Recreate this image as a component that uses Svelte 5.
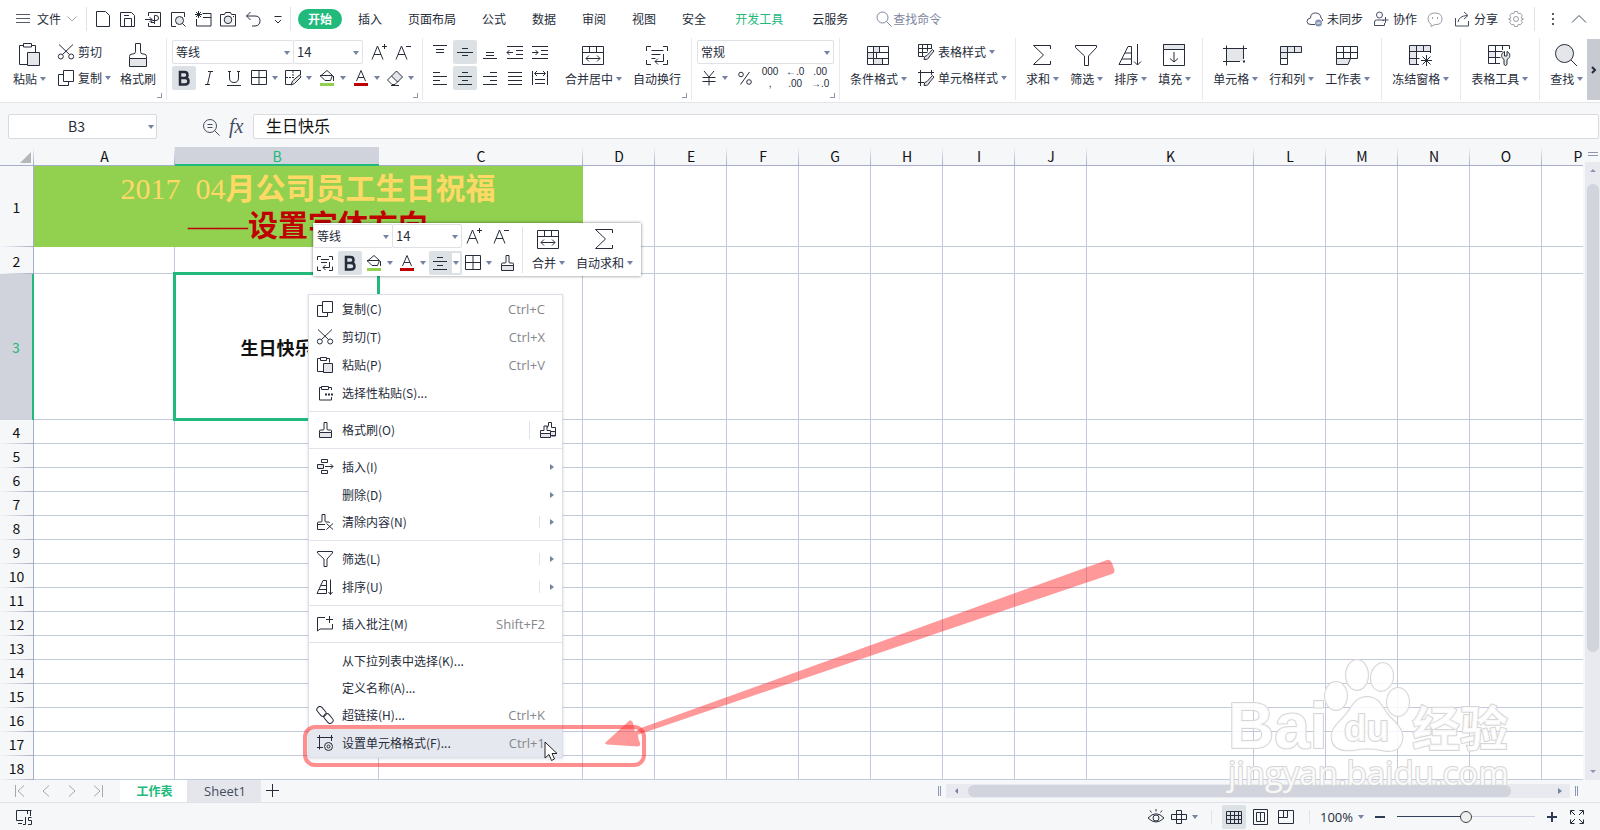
<script lang="ts">
	type MenuItem = {
		label: string;
		icon?: string;
		keys?: string;
		sub?: boolean;
		split?: boolean;
		extra?: string;
		active?: boolean;
	};

	const F = 'fill="#e4e6ea"';

	// 24px drawings
	const big: Record<string, string> = {
		paste: `<path d="M10 21.5H2.5v-19h4M14.5 2.5h4v7M6.5.5h8v3.5h-8z"/><path ${F} d="M10.5 9.5h12v13h-12z"/>`,
		brush: `<path ${F} d="M3.5 15.5h17v8h-17z"/><path d="M3.5 15.5v-2q0-2.5 2.5-2.5h1q2.5 0 2.5-2.5v-8h5v8q0 2.5 2.5 2.5h1q2.5 0 2.5 2.5v2"/>`,
		merge: `<path d="M1.5 3.5h21v18h-21zM1.5 9.5h21M8.5 3.5v6M15.5 3.5v6M5 15.5h14M8 12.5l-3 3 3 3M16 12.5l3 3-3 3"/>`,
		wrap: `<path d="M1.5 8V3.5H6M18 3.5h4.5V8M1.5 17v4.5H6M18 21.5h4.5V17M6.5 7.5h12M6.5 11.5h9M6.5 15.5h4M18.5 11v7.5H10M13 15.5l-3 3 3 3"/>`,
		cond: `<path ${F} d="M7.5 3.5h6v6h-6zM7.5 9.5h-6v6h6zM7.5 15.5h9v6h-9z" stroke="none"/><path d="M1.5 3.5h21v18h-21zM1.5 9.5h21M1.5 15.5h21M7.5 3.5v18M13.5 3.5v6M10.5 9.5v6M16.5 15.5v6"/>`,
		sum: `<path d="M20.5 6V2.5h-17l10 9.5-10 9.5h17V18"/>`,
		funnel: `<path d="M1.5 2.5h21v2l-8 8.5v9.5h-4V13l-9-8.5z"/>`,
		sort: `<path d="M1 21.5L10 3.5h3.5v18zM7 10h6.5M4 16h9.5M19.5 1v21M16 18.5l3.5 3.5 3.5-3.5"/>`,
		fill: `<path d="M1.5 1.5h21v21h-21z"/><path ${F} d="M1.5 1.5h21v5h-21z"/><path d="M12 9v10M8 15.5l4 3.5 4-3.5"/>`,
		cell: `<path ${F} stroke="none" d="M4 6h16v12H4z"/><path d="M3.5 2.5v20M20.5 2.5V16M0 5.5h24M0 18.5h17"/><path d="M20 18.5h2" stroke-width="2"/>`,
		rowcol: `<path ${F} d="M1.5 3.5h21v6h-14v6h-7z"/><path d="M8.5 3.5v6h-7M15.5 3.5v6M1.5 15.5v6h7v-6"/>`,
		sheet: `<path d="M1.5 3.5h21v12h-21zM1.5 9.5h21M8.5 3.5v12M15.5 3.5v12"/><path ${F} d="M1.5 15.5h14l-2.5 6H1.5z"/>`,
		freeze: `<path ${F} stroke="none" d="M1 3h21v6H8v12H1z"/><path d="M11 21.5H1.5v-19h21V10M1.5 8.5h21M1.5 15.5h10M8.5 2.5v19M15.5 2.5V9M18.5 12v11M13 17.5h11M14.5 13.5l8 8M22.5 13.5l-8 8"/>`,
		tools: `<path ${F} stroke="none" d="M1 9h7v6H1z"/><path d="M13 20.5H1.5v-18h21V6M1.5 8.5h14M1.5 14.5h12M8.5 2.5v18M15.5 2.5V7"/><path ${F} d="M17.5 8.5c-3.5 1.5-4 6-.5 8v5q1.5 2 3 0v-5c4-2 3.5-6.5 0-8v4.5h-2.5z"/>`,
		find: `<circle ${F} cx="10.5" cy="10.5" r="9"/><path d="M17 17l6 6"/>`
	};

	// 18px drawings
	const small: Record<string, string> = {
		file: `<path d="M2.5 1.5h9l4 4v11h-13z"/>`,
		save: `<path d="M1.5 2.5h11l3 3v11h-14zM5.500 16V8.5h7V16M5 5.5h5"/>`,
		pdf: `<path d="M4.5 6V2.5h12v14h-12V13M1 9.5h7M5.5 7l2.5 2.5L5.5 12M10.5 14V5.5h1.5q2.5 0 2.5 2.5t-2.5 2.5h-3q-2 0-2 2h3.5"/>`,
		preview: `<path d="M7 16.5H2.5v-14h13V7"/><circle ${F} cx="10.5" cy="10.5" r="4"/><path d="M13.5 13.5l3 3"/>`,
		print: `<path d="M8.5 3.5h8.5v12.5H2.5V9M9 7.5h8M1 4.5h7M4.5 1v7M2 2l5 5M7 2L2 7"/>`,
		camera: `<path d="M1.5 4.5h4l1-2h5l1 2h4v11.5h-15z"/><circle ${F} cx="9" cy="9.8" r="3.8"/><path d="M14 6.5h1"/>`,
		undo: `<path d="M6.5 2L2.5 6l4 4M2.5 6H11q5 0 5 4.8T11 16H8"/>`,
		more: `<path d="M5.5 6.5h7M6 10l3 3 3-3"/>`,
		cut: `<circle cx="3.8" cy="13.5" r="2.5"/><circle cx="14.2" cy="13.5" r="2.5"/><path d="M2 1.5l10.5 10M16 1.5L5.5 11.5"/>`,
		copy: `<path d="M6.5 1.5h10v11h-10zM6.5 5.5h-5v11h10v-4"/>`,
		paste: `<path d="M7 15.5H1.5v-13h3M10.5 2.5h3v4M4.5 1.5h6v3h-6z"/><path ${F} d="M7.5 7.5h9v9h-9z"/>`,
		pasteSp: `<path d="M15.5 6V3.5h-3M5.5 3.5h-2v12.5h12v-3M5.5 2.5h7v3h-7z"/><path stroke-width="2" stroke-dasharray="2 1" d="M9 10.5h8"/>`,
		brush: `<path ${F} d="M3.500 11.5h12v5h-12z"/><path d="M3.5 11.5V10q0-1 1-1h2.5q1 0 1-1V1.500h3V8q0 1 1 1h2.5q1 0 1 1v1.5"/>`,
		brush2: `<path d="M8.5 6.5V5h1V1.500h3V6.500h4v8.500h-4M1.5 12.5v-3H5V5h3v4.5h3.500v3"/><path ${F} d="M1.5 12.5h10v4h-10z"/><path ${F} d="M11.500 10.500h5v4h-5z"/>`,
		insert: `<path d="M5.5 1.5h6v3h-6zM5.5 12.5h6v3h-6zM9 8.5h8M14.5 6l2.5 2.5-2.5 2.5"/><path ${F} d="M1.5 6.5h6v4h-6z"/>`,
		clear: `<path d="M9 16.5H1.5V10q0-1 1-1H5q1 0 1-1V1.5h3V8q0 1 1 1h2.5q1 0 1 1M1.5 11.5H9M10.5 10.5l6.5 6M17 10.5l-6.5 6"/>`,
		funnel: `<path d="M1.5 1.5h15v1.5l-5.5 6v7.500H8V9L1.5 3z"/>`,
		sort: `<path d="M1 15.500L7 2.5h3.5v13zM5 7.500h5.5M3 11.5h7.5M14.5 1.5v15M12.5 14l2 2.5 2-2.5"/>`,
		note: `<path d="M9 2.5H1.5V16l2.5-2h12.500V9M13.500 1v7M10 4.500h7"/>`,
		link: `<rect x="-5.500" y="-3" width="11" height="6" rx="3" transform="translate(5.500 5.500) rotate(50)"/><rect x="-5.500" y="-3" width="11" height="6" rx="3" transform="translate(12.500 12.500) rotate(50)"/>`,
		cellfmt: `<path d="M1 3.500h16M3.500 1v14.500M15.500 1v6M1 13.500h6"/><circle ${F} cx="12.500" cy="12.500" r="4"/><circle cx="12.500" cy="12.500" r="1.500"/>`,
		tblStyle: `<path d="M7 13.5H1.5v-12h13V6M1.5 5.5h13M1.5 9.5h9M5.5 1.5v12M10.5 1.5v7"/><path ${F} d="M7 16.5q0-4 3-4l5.5-6 1.5 1.5-5 6q0 2.5-5 2.5z"/>`,
		cellStyle: `<path d="M1 3.5h16M3.5 1v16M14.5 1v5M1 13.5h6"/><path ${F} d="M7 16.5q0-4 3-4l5.5-6 1.5 1.5-5 6q0 2.5-5 2.5z"/>`,
		bigger: `<path d="M2 16.5L7.5 3l5.5 13.5M4 11.5h7M14.5 1v5M12 3.5h5"/>`,
		smaller: `<path d="M2 16.5L7.5 3l5.5 13.5M4 11.5h7M12 3.5h5"/>`,
		bold: `<path stroke-width="2.5" d="M5 3h4.5q3 0 3 3t-3 3H5zM5 9h5q3.5 0 3.5 3.2T10 15.500H5z"/>`,
		italic: `<path d="M8 2.5h5M5 15.5h5M10.5 2.5l-3 13"/>`,
		underline: `<path d="M4.5 2v7q0 4.5 4.5 4.5T13.5 9V2M3 2.5h3M12 2.5h3M2 16.5h14"/>`,
		borders: `<path d="M1.500 1.500h15v14h-15zM9 1.500v14M1.500 8.500h15"/>`,
		editBorders: `<path d="M7 15.5H1.500v-14h15V6" /><path stroke-dasharray="2 1" d="M9 2v6M2 8.500h8"/><path ${F} d="M7 16l1.5-4 7-6 1.5 2-6.500 6.500z"/>`,
		fill: `<path d="M9 1.500L2.500 7 7 11.500h5.500l2-5L9 1.500zM2 6.500h12.500M15.500 7v5"/><path d="M2 15.5h14" stroke="#92d050" stroke-width="3"/>`,
		color: `<path d="M4.5 12L9 1.5 13.5 12M6 8.5h6"/><path d="M2 15.5h14" stroke="#c00000" stroke-width="3"/>`,
		eraser: `<path d="M5.500 7L1.500 11l4.500 4.500h3L12.500 12M5 16.500h8"/><path ${F} d="M5.500 7L10.500 2l6 6-5 5z"/>`,
		vtop: `<path d="M2 2.5h14M5 6.5h8M5 9.5h8"/>`,
		vmid: `<path d="M6 5.5h6M1 9.5h16M6 12.5h6"/>`,
		vbot: `<path d="M5 9.5h8M5 12.5h8M2 15.5h14"/>`,
		outdent: `<path d="M1 3.5h16M10 7.5h7M10 11.5h7M1 15.5h16M1 9.5h6M3.5 7L1 9.5 3.500 12"/>`,
		indent: `<path d="M1 3.5h16M10 7.5h7M10 11.5h7M1 15.5h16M1 9.5h6M4.5 7L7 9.5 4.5 12"/>`,
		left: `<path d="M2 3.5h7M2 7.5h14M2 11.5h7M2 15.5h14"/>`,
		center: `<path d="M6 3.5h6M2 7.5h14M6 11.5h6M2 15.5h14"/>`,
		right: `<path d="M9 3.5h7M2 7.5h14M9 11.5h7M2 15.5h14"/>`,
		justify: `<path d="M2 3.5h14M2 7.5h14M2 11.5h14M2 15.5h14"/>`,
		spread: `<path d="M1.5 2v14M16.5 2v14M4 4.5h10M6 2L3.5 4.5 6 7M12 2l2.5 2.5L12 7M4 10.5h10M4 14.5h10"/>`,
		wrap: `<path d="M1.5 6V2.5H5M13 2.5h3.5V6M1.5 12.5v4H5M13 16.5h3.5v-4M5 5.5h8M5 8.5h6M13.5 8v5.5H7M9.5 11L7 13.5 9.5 16"/>`,
		yen: `<path d="M4 2l5 6 5-6M2.5 8.5h13M2.5 12.5h13M9 8v8.5"/>`,
		percent: `<circle cx="5" cy="5.5" r="2.3"/><circle cx="13" cy="13" r="2.3"/><path d="M13.5 3l-9 12.5"/>`,
		search: `<circle cx="7.5" cy="7.5" r="5.5"/><path d="M11.5 11.5l5 5"/>`,
		lens: `<circle cx="8" cy="8" r="6.5"/><path d="M12.5 12.5l5 5M5.500 6.5h5M5.500 9.5h5"/>`,
		cloud: `<path d="M9 14.5H5q-4 0-4-3t3.500-3.500q0-5 5-5t5.500 5q2 1 1.500 3"/><circle cx="12.5" cy="13" r="3.5" fill="#8794b5" stroke="none"/><path stroke="#fff" d="M10.5 13h4"/>`,
		people: `<circle cx="7.5" cy="5" r="3"/><path d="M12.500 13v2.500h-10V12q0-2 2-2h5q2 0 2.500 1M13.500 7v6M10.500 10h6"/>`,
		face: `<path d="M9 14.500l-4 2v-2.500Q2 12.500 2 9q0-6 7-6t7 6-7 5.500z"/><path d="M6.5 7v2M11.5 7v2"/>`,
		share: `<path d="M2.5 8v8h13v-5M5 12q1-6 9-6.5M11 2l4 3.5L11 9"/>`,
		gear: `<path d="M7.500 1.500h3l.7 2.200 2.200-.5 2 2.600-1.400 1.900L16.500 9l-2.500 1.300 1.400 1.900-2 2.600-2.200-.5-.7 2.200h-3l-.7-2.200-2.200.5-2-2.600L4 10.300 1.500 9 4 7.700 2.600 5.800l2-2.600 2.200.5z"/><circle cx="9" cy="9" r="2.500"/>`,
		js: `<path d="M8 12.5H1.5v-10h15M3 15.5h4M12.500 2.500V6M15.500 2.500V8M8 16.500h2.500V9M16.500 9.500H13.500V12.500h3v4h-3.500"/>`,
		eye: `<path d="M1 10q8-8.5 16 0-8 8-16 0zM9 1v2.500M3 2.500l1.500 2M15 2.500l-1.500 2"/><circle cx="9" cy="10" r="3"/>`,
		cross: `<path d="M6.5 2.5h5v13h-5zM1.5 6.5h15v5h-15z"/>`,
		grid: `<path d="M1.5 3.5h15v12h-15zM1.5 7.5h15M1.5 11.5h15M5.5 3.5v12M9.5 3.5v12M13.5 3.500v12"/>`,
		page: `<path d="M2.5 1.5h14v15h-14zM5.500 4.500h4v9h-4zM9.500 4.500h4v9h-4z"/>`,
		breaks: `<path d="M1.5 2.5h15v13h-15zM1.5 9.5h9v-7M6.5 2.5v7"/>`,
		full: `<path d="M2.5 6.5v-4h4M11.5 2.5h4v4M2.5 11.5v4h4M11.5 15.5h4v-4M3 3l4 4M15 3l-4 4M3 15l4-4M15 15l-4-4"/>`
	};

	const quick = [
		['file', '新建'],
		['save', '保存'],
		['pdf', '输出为PDF'],
		['preview', '打印预览'],
		['print', '打印'],
		['camera', '截图'],
		['undo', '撤消'],
		['more', '自定义快速访问工具栏']
	];
	const tabs = ['插入', '页面布局', '公式', '数据', '审阅', '视图', '安全', '开发工具', '云服务'];

	const columns = [
		{ name: 'A', width: 141 },
		{ name: 'B', width: 204 },
		{ name: 'C', width: 204 },
		...[...'DEFGHIJ'].map((name) => ({ name, width: 72 })),
		{ name: 'K', width: 167 },
		...[...'LMNOP'].map((name) => ({ name, width: 72 }))
	];
	const heights: Record<number, number> = { 1: 81, 2: 27, 3: 146 };
	const rows = Array.from({ length: 18 }, (_, i) => i + 1);

	const menu: MenuItem[][] = [
		[
			{ label: '复制(C)', icon: 'copy', keys: 'Ctrl+C' },
			{ label: '剪切(T)', icon: 'cut', keys: 'Ctrl+X' },
			{ label: '粘贴(P)', icon: 'paste', keys: 'Ctrl+V' },
			{ label: '选择性粘贴(S)...', icon: 'pasteSp' }
		],
		[{ label: '格式刷(O)', icon: 'brush', extra: 'brush2' }],
		[
			{ label: '插入(I)', icon: 'insert', sub: true },
			{ label: '删除(D)', sub: true },
			{ label: '清除内容(N)', icon: 'clear', sub: true, split: true }
		],
		[
			{ label: '筛选(L)', icon: 'funnel', sub: true, split: true },
			{ label: '排序(U)', icon: 'sort', sub: true, split: true }
		],
		[{ label: '插入批注(M)', icon: 'note', keys: 'Shift+F2' }],
		[
			{ label: '从下拉列表中选择(K)...' },
			{ label: '定义名称(A)...' },
			{ label: '超链接(H)...', icon: 'link', keys: 'Ctrl+K' },
			{ label: '设置单元格格式(F)...', icon: 'cellfmt', keys: 'Ctrl+1', active: true }
		]
	];

	let cellRef = $state('B3');
	let formula = $state('生日快乐');
	let zoom = $state(50);
</script>

{#snippet ico(name: string)}
	<svg class="ico" width="18" height="18" viewBox="0 0 18 18" aria-hidden="true">{@html small[name]}</svg>
{/snippet}

{#snippet tool(name: string, label: string, drop = false, on = false)}
	<button class="tool" class:drop class:on aria-label={label}>
		{@render ico(name)}
		{#if drop}<i class="caret"></i>{/if}
	</button>
{/snippet}

{#snippet bigTool(name: string, label: string, drop = true)}
	<button class="big">
		<svg class="ico" width="24" height="24" viewBox="0 0 24 24" aria-hidden="true">{@html big[name]}</svg>
		<span>{label}{#if drop}<i class="caret"></i>{/if}</span>
	</button>
{/snippet}

{#snippet rowTool(name: string, label: string, drop = true)}
	<button class="row-tool">{@render ico(name)}<span>{label}</span>{#if drop}<i class="caret"></i>{/if}</button>
{/snippet}

{#snippet fontFields()}
	<label class="field font"><select aria-label="字体"><option>等线</option></select><i class="caret"></i></label>
	<label class="field size"><select aria-label="字号"><option>14</option></select><i class="caret"></i></label>
{/snippet}

<div class="app">
	<header class="topbar">
		<button class="file-btn">
			<svg class="ico thin" width="16" height="12" viewBox="0 0 16 12"><path d="M1 1.5h14M1 5.5h14M1 9.5h14" /></svg>
			<span>文件</span>
			<svg class="ico pale" width="10" height="8" viewBox="0 0 10 8"><path d="M.5 1.5L5 6l4.5-4.5" /></svg>
		</button>
		<i class="bar"></i>
		{#each quick as [name, label] (name)}
			<button class="quick" aria-label={label}>{@render ico(name)}</button>
		{/each}
		<i class="bar"></i>
		<nav class="tabs">
			<button class="tab current">开始</button>
			{#each tabs as tab (tab)}
				<button class="tab" class:dev={tab === '开发工具'}>{tab}</button>
			{/each}
		</nav>
		<button class="find-cmd">{@render ico('search')}查找命令</button>
		<div class="account">
			<button>{@render ico('cloud')}未同步</button>
			<button>{@render ico('people')}协作</button>
			<button class="faint" aria-label="反馈">{@render ico('face')}</button>
			<button>{@render ico('share')}分享</button>
			<button class="faint" aria-label="设置">{@render ico('gear')}</button>
			<i class="bar"></i>
			<button class="dots" aria-label="更多">
				<svg width="4" height="14" viewBox="0 0 4 14" fill="#555b68"><path d="M1 1h2v2H1zM1 6h2v2H1zM1 11h2v2H1z" /></svg>
			</button>
			<button aria-label="折叠功能区">
				<svg class="ico thin" width="16" height="10" viewBox="0 0 16 10"><path d="M1 8.5l7-7 7 7" /></svg>
			</button>
		</div>
	</header>

	<section class="ribbon">
		<div class="group first">
			{@render bigTool('paste', '粘贴')}
			<div class="stack">
				{@render rowTool('cut', '剪切', false)}
				{@render rowTool('copy', '复制')}
			</div>
			{@render bigTool('brush', '格式刷', false)}
			<i class="corner"></i>
		</div>
		<div class="group wide">
			<div class="lines">
				<div class="line">
					{@render fontFields()}
					<div class="line steps">
						{@render tool('bigger', '增大字号')}
						{@render tool('smaller', '减小字号')}
					</div>
				</div>
				<div class="line">
					{@render tool('bold', '加粗', false, true)}
					{@render tool('italic', '倾斜')}
					{@render tool('underline', '下划线')}
					{@render tool('borders', '边框', true)}
					{@render tool('editBorders', '绘制边框', true)}
					{@render tool('fill', '填充颜色', true)}
					{@render tool('color', '字体颜色', true)}
					{@render tool('eraser', '清除', true)}
				</div>
			</div>
			<i class="corner"></i>
		</div>
		<div class="group wide">
			<div class="lines align">
				<div class="line">
					{@render tool('vtop', '顶端对齐')}
					{@render tool('vmid', '垂直居中', false, true)}
					{@render tool('vbot', '底端对齐')}
					{@render tool('outdent', '减少缩进量')}
					{@render tool('indent', '增加缩进量')}
				</div>
				<div class="line">
					{@render tool('left', '左对齐')}
					{@render tool('center', '水平居中', false, true)}
					{@render tool('right', '右对齐')}
					{@render tool('justify', '两端对齐')}
					{@render tool('spread', '分散对齐')}
				</div>
			</div>
			{@render bigTool('merge', '合并居中')}
			{@render bigTool('wrap', '自动换行', false)}
			<i class="corner"></i>
		</div>
		<div class="group wide">
			<div class="lines">
				<label class="field number"><select aria-label="数字格式"><option>常规</option></select><i class="caret"></i></label>
				<div class="line formats">
					{@render tool('yen', '货币', true)}
					{@render tool('percent', '百分比')}
					<button class="tool digits" aria-label="千位分隔"><span>000</span><span>,</span></button>
					<button class="tool digits" aria-label="增加小数位"><span>←.0</span><span>.00</span></button>
					<button class="tool digits" aria-label="减少小数位"><span>.00</span><span>→.0</span></button>
				</div>
			</div>
			<i class="corner"></i>
		</div>
		<div class="group">
			{@render bigTool('cond', '条件格式')}
			<div class="stack">
				{@render rowTool('tblStyle', '表格样式')}
				{@render rowTool('cellStyle', '单元格样式')}
			</div>
		</div>
		<div class="group">
			{@render bigTool('sum', '求和')}
			{@render bigTool('funnel', '筛选')}
			{@render bigTool('sort', '排序')}
			{@render bigTool('fill', '填充')}
		</div>
		<div class="group">
			{@render bigTool('cell', '单元格')}
			{@render bigTool('rowcol', '行和列')}
			{@render bigTool('sheet', '工作表')}
		</div>
		<div class="group">{@render bigTool('freeze', '冻结窗格')}</div>
		<div class="group">{@render bigTool('tools', '表格工具')}</div>
		<div class="group">{@render bigTool('find', '查找')}</div>
		<button class="scroll-right" aria-label="更多工具">
			<svg width="6" height="10" viewBox="0 0 6 10" fill="none" stroke="#262c3a" stroke-width="2"><path d="M1 2l3 3-3 3" /></svg>
		</button>
	</section>

	<section class="formula-bar">
		<div class="name-box">
			<input aria-label="名称框" bind:value={cellRef} />
			<i class="caret"></i>
		</div>
		<button class="lens" aria-label="浏览公式结果">{@render ico('lens')}</button>
		<button class="fx">fx</button>
		<input class="formula" aria-label="编辑栏" bind:value={formula} />
	</section>

	<main class="sheet">
		<div class="viewport">
			<table>
				<colgroup>
					<col style="width: 34px" />
					{#each columns as col (col.name)}
						<col style="width: {col.width}px" />
					{/each}
				</colgroup>
				<thead>
					<tr>
						<th class="all" aria-label="全选">
							<svg width="11" height="11" viewBox="0 0 11 11"><path d="M11 0v11H0z" fill="#b4b6ba" /></svg>
						</th>
						{#each columns as col (col.name)}
							<th scope="col" class:selected={col.name === 'B'}>{col.name}</th>
						{/each}
					</tr>
				</thead>
				<tbody>
					{#each rows as row (row)}
						<tr style="height: {heights[row] ?? 24}px">
							<th scope="row" class:selected={row === 3}>{row}</th>
							{#each columns as col, i (col.name)}
								{#if row === 1 && i === 0}
									<td class="title" colspan="3">
										<div class="wish"><span>2017&nbsp;&nbsp;04</span>月公司员工生日祝福</div>
										<div class="topic"><span>——</span>设置字体方向</div>
									</td>
								{:else if row === 1 && i < 3}
									<!-- merged into A1 -->
								{:else if row === 3 && i === 1}
									<td class="active">生日快乐</td>
								{:else}
									<td></td>
								{/if}
							{/each}
						</tr>
					{/each}
				</tbody>
			</table>
		</div>
		<div class="side">
			<div class="splitter"></div>
			<div class="vscroll">
				<i class="tri up"></i>
				<div class="thumb"></div>
				<i class="tri down"></i>
			</div>
		</div>
	</main>

	<footer class="sheetbar">
		<div class="nav">
			<button aria-label="第一张"><svg class="ico pale" width="12" height="14" viewBox="0 0 12 14"><path d="M1.5 1v12M10 1.5L4 7l6 5.5" /></svg></button>
			<button aria-label="上一张"><svg class="ico pale" width="12" height="14" viewBox="0 0 12 14"><path d="M9 1.5L3 7l6 5.5" /></svg></button>
			<button aria-label="下一张"><svg class="ico pale" width="12" height="14" viewBox="0 0 12 14"><path d="M3 1.5L9 7l-6 5.5" /></svg></button>
			<button aria-label="最后一张"><svg class="ico pale" width="12" height="14" viewBox="0 0 12 14"><path d="M10.5 1v12M2 1.5L8 7l-6 5.5" /></svg></button>
		</div>
		<button class="sheet-tab on">工作表</button>
		<button class="sheet-tab">Sheet1</button>
		<button class="add" aria-label="新建工作表">
			<svg class="ico" width="14" height="14" viewBox="0 0 14 14"><path d="M6.5 0v13M0 6.5h13" /></svg>
		</button>
		<div class="hscroll-wrap">
			<i class="grip"></i>
			<div class="hscroll">
				<i class="tri prev"></i>
				<div class="thumb"></div>
				<i class="tri next"></i>
			</div>
			<i class="grip"></i>
		</div>
	</footer>

	<footer class="status">
		<button class="js" aria-label="宏">{@render ico('js')}</button>
		<div class="views">
			{@render tool('eye', '护眼模式')}
			{@render tool('cross', '阅读模式', true)}
			<i class="bar"></i>
			{@render tool('grid', '普通视图', false, true)}
			{@render tool('page', '页面布局')}
			{@render tool('breaks', '分页预览')}
			<i class="bar"></i>
			<button class="percent">100%<i class="caret"></i></button>
			<button class="step" aria-label="缩小"><svg width="10" height="10" viewBox="0 0 10 10" stroke="#2c3a55" stroke-width="2"><path d="M0 5h10" /></svg></button>
			<input type="range" aria-label="缩放" min="0" max="100" bind:value={zoom} />
			<button class="step in" aria-label="放大"><svg width="10" height="10" viewBox="0 0 10 10" stroke="#2c3a55" stroke-width="2"><path d="M0 5h10M5 0v10" /></svg></button>
			{@render tool('full', '全屏显示')}
		</div>
	</footer>

	<div class="watermark">
		<svg width="300" height="150" viewBox="0 0 300 150">
			<g class="paw">
				<ellipse cx="114" cy="38" rx="11" ry="14" />
				<ellipse cx="135" cy="17" rx="11" ry="15" />
				<ellipse cx="160" cy="19" rx="11" ry="14" transform="rotate(10 160 19)" />
				<ellipse cx="176" cy="44" rx="11" ry="14" />
				<path d="M145 39c14 0 15 13 24 21 9 9 13 15 11 23-3 11-13 11-21 9-9-2-18-2-27 0-9 1-20 0-22-10-2-9 4-15 11-22 9-9 11-21 24-21z" />
			</g>
			<text class="bai" x="6" y="90">Bai</text>
			<text class="du" x="122" y="83">du</text>
			<text class="jy" x="190" y="88">经验</text>
			<text class="url" x="6" y="127">jingyan.baidu.com</text>
		</svg>
	</div>

	<div class="mini">
		<div class="lines">
			<div class="line">
				{@render fontFields()}
				<div class="line steps">
					{@render tool('bigger', '增大字号')}
					{@render tool('smaller', '减小字号')}
				</div>
			</div>
			<div class="line">
				{@render tool('wrap', '自动换行')}
				{@render tool('bold', '加粗', false, true)}
				{@render tool('fill', '填充颜色', true)}
				{@render tool('color', '字体颜色', true)}
				{@render tool('center', '水平居中', true, true)}
				{@render tool('borders', '边框', true)}
				{@render tool('brush', '格式刷')}
			</div>
		</div>
		<i class="bar"></i>
		{@render bigTool('merge', '合并')}
		{@render bigTool('sum', '自动求和')}
	</div>

	<div class="menu" role="menu">
		{#each menu as section, i (i)}
			{#if i > 0}<hr />{/if}
			{#each section as item (item.label)}
				<button class="item" class:short={!item.icon} class:hover={item.active} role="menuitem">
					<span class="slot">{#if item.icon}{@render ico(item.icon)}{/if}</span>
					<span class="label">{item.label}</span>
					{#if item.keys}<span class="keys">{item.keys}</span>{/if}
					{#if item.extra}<span class="extra">{@render ico(item.extra)}</span>{/if}
					{#if item.sub}<span class="sub" class:split={item.split}><i class="tri next"></i></span>{/if}
				</button>
			{/each}
		{/each}
	</div>

	<div class="highlight"></div>
	<svg class="pointer-line" width="830" height="225" viewBox="296 550 830 225" aria-hidden="true">
		<path d="M641 728L1107 560q3-1 5 3l2.5 7q.5 3-2.5 4L637 735l1 0q0 4 2 8 1 3-2 3.5l-31-2q-3-.5-1-2.500l23-21q2-2 4 2l2 9z" />
	</svg>
	<svg class="cursor" width="14" height="21" viewBox="0 0 14 21" aria-hidden="true">
		<path d="M1 1v16l4-3.5L7.5 19.5l3-1.500-2.500-5.500h5z" fill="#fff" stroke="#222" />
	</svg>
</div>

<style>
	:global(body) {
		overflow: hidden;
	}

	.app {
		position: relative;
		display: flex;
		flex-direction: column;
		height: 100vh;
		overflow: hidden;
		background: #f5f7f9;
		color: #262c3a;
		font-family: 'Noto Sans CJK SC', sans-serif;
		font-size: 12px;
		line-height: 20px;
	}

	button,
	input,
	select {
		box-sizing: border-box;
		margin: 0;
		padding: 0;
		border: 0;
		background: none;
		color: inherit;
		font: inherit;
		outline: none;
	}

	button {
		display: flex;
		align-items: center;
		white-space: nowrap;
	}

	.ico {
		display: block;
		flex: none;
		fill: none;
		stroke: #262c3a;
	}

	.ico.thin {
		stroke: #555b68;
	}

	.ico.pale {
		stroke: #a4a8b0;
	}

	.caret {
		flex: none;
		width: 0;
		border: 3px solid transparent;
		border-top: 4px solid #7582a3;
		border-bottom: 0;
	}

	.bar {
		flex: none;
		width: 1px;
		height: 20px;
		background: #e1e3e7;
	}

	.topbar {
		display: flex;
		align-items: center;
		flex: none;
		height: 38px;
		background: #fff;
	}

	.file-btn {
		gap: 6px;
		width: 86px;
		padding-left: 15px;
	}

	.topbar .bar {
		height: 24px;
	}

	.quick {
		justify-content: center;
		width: 25px;
		height: 24px;
	}

	.file-btn + .bar {
		margin-right: 3px;
	}

	.tabs {
		display: flex;
		align-items: center;
		margin-left: 7px;
	}

	.tab {
		height: 20px;
		padding: 0 13px;
	}

	.tab.current {
		margin-right: 3px;
		padding: 0 10px;
		border-radius: 10px;
		background: #21b97c;
		color: #fff;
		font-weight: bold;
	}

	.tab.dev {
		margin: 0 3px;
		color: #21b97c;
	}

	.find-cmd {
		margin-left: 14px;
		color: #7d869c;
	}

	.find-cmd .ico {
		stroke: #7d869c;
	}

	.account {
		display: flex;
		align-items: center;
		gap: 9px;
		margin-left: auto;
		padding-right: 13px;
	}

	.account button {
		gap: 3px;
	}

	.account .ico {
		stroke: #444c60;
	}

	.account .faint .ico {
		stroke: #9a9ea6;
	}

	.account .bar {
		margin-right: 7px;
	}

	.dots {
		margin-right: 7px;
	}

	.ribbon {
		position: relative;
		display: flex;
		flex: none;
		height: 65px;
		box-sizing: border-box;
		border-bottom: 1px solid #e3e5e9;
		background: #fff;
	}

	.group {
		position: relative;
		display: flex;
		flex: none;
		height: 62px;
		box-sizing: border-box;
		padding: 2px 6px 0 4px;
		border-left: 1px solid #e8eaed;
	}

	.group.first {
		padding: 2px 5px 0 7px;
		border-left: 0;
	}

	.group.wide {
		padding: 2px 5px 0;
	}

	.corner {
		position: absolute;
		right: 4px;
		bottom: 2px;
		width: 5px;
		height: 5px;
		border: solid #8c95ab;
		border-width: 0 1px 1px 0;
		box-sizing: border-box;
	}

	.big {
		flex-direction: column;
		height: 50px;
		padding: 3px 6px 0;
	}

	.big span {
		display: flex;
		align-items: center;
		gap: 3px;
		margin-right: -1px;
		line-height: 22px;
	}

	.big .ico {
		margin-bottom: 1px;
	}

	.stack {
		display: flex;
		flex-direction: column;
		gap: 2px;
		padding: 0 2px 0 5px;
	}

	.first .stack {
		padding: 0 3px 0 6px;
	}

	.row-tool {
		gap: 3px;
		height: 24px;
	}

	.lines {
		display: flex;
		flex-direction: column;
		gap: 2px;
	}

	.lines.align {
		margin-right: 6px;
	}

	.line {
		display: flex;
	}

	.steps {
		margin-left: 4px;
	}

	.tool {
		justify-content: center;
		width: 24px;
		height: 24px;
		margin-right: 1px;
		border-radius: 2px;
	}

	.tool.drop {
		width: 34px;
		margin: 0;
		padding-left: 3px;
		justify-content: flex-start;
		gap: 4px;
	}

	.steps .tool {
		margin: 0;
	}

	.formats .drop {
		margin-right: 2px;
	}

	.on {
		background: #dce1e6;
	}

	.digits {
		flex-direction: column;
		font-family: 'Liberation Sans', sans-serif;
		font-size: 10px;
		line-height: 12px;
	}

	.field {
		position: relative;
		display: block;
		height: 24px;
		box-sizing: border-box;
		border: 1px solid #dfe1e5;
		border-radius: 2px;
		background: #fff;
	}

	.field select {
		appearance: none;
		width: 100%;
		height: 22px;
		padding-left: 3px;
	}

	.field .caret {
		position: absolute;
		right: 3px;
		top: 10px;
		pointer-events: none;
	}

	.font {
		width: 122px;
	}

	.size {
		width: 70px;
		margin-left: -1px;
	}

	.size select {
		font-size: 13px;
	}

	.number {
		width: 137px;
	}

	.scroll-right {
		position: absolute;
		top: 1px;
		right: 0;
		justify-content: center;
		width: 13px;
		height: 61px;
		background: #c8cad1;
	}

	.formula-bar {
		display: flex;
		flex: none;
		height: 44px;
		padding: 11px 1px 0 8px;
		box-sizing: border-box;
	}

	.name-box {
		position: relative;
		width: 149px;
		margin-right: 45px;
	}

	.name-box input,
	.formula {
		width: 100%;
		height: 25px;
		border: 1px solid #d8dade;
		border-radius: 2px;
		background: #fff;
		font-size: 14px;
	}

	.name-box input {
		padding: 0 12px 1px 0;
		text-align: center;
	}

	.name-box .caret {
		position: absolute;
		right: 3px;
		top: 11px;
	}

	.lens,
	.fx {
		height: 25px;
	}

	.lens .ico {
		stroke: #444c60;
	}

	.fx {
		width: 33px;
		padding: 0 0 2px 9px;
		color: #444c60;
		font-family: 'Liberation Serif', serif;
		font-size: 20px;
		font-style: italic;
	}

	.formula {
		flex: 1;
		padding: 0 0 3px 12px;
		color: #111;
		font-size: 16px;
	}

	.sheet {
		display: flex;
		flex: 1;
		min-height: 0;
	}

	.viewport {
		flex: 1;
		min-width: 0;
		overflow: hidden;
		background: #fff;
	}

	table {
		width: 100%;
		table-layout: fixed;
		border-spacing: 0;
		color: #111;
	}

	th,
	td {
		box-sizing: border-box;
		padding: 0;
	}

	th {
		font-size: 14px;
		font-weight: normal;
		line-height: 18px;
	}

	thead tr {
		height: 19px;
	}

	thead th {
		padding-top: 1px;
		border-bottom: 1px solid #a7aeca;
		background: linear-gradient(#f5f7f9, #a7aeca) right / 1px 100% no-repeat #f5f7f9;
		line-height: 17px;
	}

	tbody th {
		border-right: 1px solid #a7aeca;
		background: linear-gradient(to right, #f5f7f9, #a7aeca) bottom / 100% 1px no-repeat #f5f7f9;
	}

	thead th.selected {
		border-bottom: 2px solid #21b97c;
		background: #d0d3dc;
		color: #21b97c;
		line-height: 16px;
	}

	tbody th.selected {
		border-right: 2px solid #21b97c;
		background: #d0d3dc;
		color: #21b97c;
	}

	.all svg {
		display: block;
		margin: 2px 3px 0 auto;
	}

	td {
		border: solid #c3c9dc;
		border-width: 0 1px 1px 0;
		text-align: center;
	}

	.title {
		border-color: #92d050;
		background: #92d050;
		font-size: 30px;
		line-height: 34px;
		white-space: nowrap;
	}

	.wish {
		color: #ffd966;
		font-weight: bold;
	}

	.title span {
		font-family: 'Liberation Serif', serif;
		font-weight: normal;
	}

	.topic {
		color: #c00000;
		font-weight: bold;
	}

	.active {
		position: relative;
		font-size: 18px;
		font-weight: bold;
	}

	.active::after {
		content: '';
		position: absolute;
		inset: -2px;
		border: 3px solid #21b97c;
	}

	.side {
		display: flex;
		flex-direction: column;
		width: 17px;
		padding-left: 2px;
		box-sizing: border-box;
	}

	.splitter {
		height: 2px;
		margin: 5px 2px 6px 3px;
		border: solid #8f96ab;
		border-width: 1px 0;
	}

	.vscroll {
		display: flex;
		flex-direction: column;
		align-items: center;
		flex: 1;
		background: #e8eaef;
	}

	.vscroll .thumb {
		width: 12px;
		flex: 1;
		margin: 12px 0 118px;
	}

	.thumb {
		border-radius: 6px;
		background: #d1d4dc;
	}

	.tri {
		flex: none;
		border: 3px solid transparent;
	}

	.up {
		margin-top: 4px;
		border-bottom-color: #8b96b4;
	}

	.down {
		margin-bottom: 4px;
		border-top-color: #8b96b4;
	}

	.prev {
		border-right-color: #7582a3;
	}

	.next {
		border-left: 4px solid #7582a3;
		border-right: 0;
	}

	.sheetbar {
		display: flex;
		flex: none;
		height: 23px;
		box-sizing: border-box;
		border-bottom: 1px solid #dfe1e6;
	}

	.nav {
		display: flex;
		align-items: center;
		gap: 14px;
		width: 120px;
		padding-left: 14px;
		box-sizing: border-box;
	}

	.sheet-tab {
		justify-content: center;
		width: 74px;
		padding-left: 2px;
		background: #e5e6ec;
		color: #444c60;
		font-family: 'Open Sans', sans-serif;
		font-size: 13px;
	}

	.sheet-tab.on {
		width: 67px;
		background: #fff;
		color: #21b97c;
		font-family: inherit;
		font-size: 12px;
		font-weight: bold;
	}

	.add {
		padding: 0 5px;
	}

	.hscroll-wrap {
		display: flex;
		align-items: center;
		gap: 5px;
		width: 640px;
		margin-left: auto;
		padding-right: 22px;
	}

	.grip {
		width: 1px;
		height: 10px;
		border: solid #8b96b4;
		border-width: 0 1px;
	}

	.hscroll {
		display: flex;
		align-items: center;
		flex: 1;
		height: 14px;
		padding: 0 8px 0 6px;
		background: #e8eaef;
	}

	.hscroll .thumb {
		flex: 1;
		height: 12px;
		margin: 0 47px 0 10px;
	}

	.status {
		display: flex;
		align-items: center;
		flex: none;
		height: 27px;
	}

	.js {
		margin-left: 15px;
	}

	.views {
		display: flex;
		align-items: center;
		margin-left: auto;
		padding-right: 10px;
	}

	.views .bar {
		height: 14px;
		margin: 0 10px;
	}

	.views .tool + .tool {
		margin-left: 1px;
	}

	.views .tool.drop {
		width: 32px;
		margin: 0;
		padding-left: 1px;
	}

	.percent {
		gap: 5px;
		margin-right: 11px;
		font-family: 'Open Sans', sans-serif;
		font-size: 13px;
	}

	.step {
		height: 24px;
	}

	.step.in {
		margin-right: 8px;
	}

	input[type='range'] {
		appearance: none;
		width: 138px;
		height: 13px;
		margin: 0 12px;
		background: linear-gradient(to right, #34405a 50%, #cbd0db 50%) center / 100% 1px no-repeat;
	}

	input[type='range']::-webkit-slider-thumb {
		appearance: none;
		width: 12px;
		height: 12px;
		border: 1px solid #444;
		border-radius: 50%;
		background: #f0f0f0;
	}

	.watermark {
		position: absolute;
		right: 78px;
		bottom: 22px;
		pointer-events: none;
	}

	.watermark svg {
		display: block;
	}

	.paw,
	.watermark text {
		fill: rgba(255, 255, 255, 0.85);
		stroke: #d6d6d6;
		stroke-width: 2;
		stroke-linejoin: round;
		paint-order: stroke;
	}

	.bai,
	.du,
	.jy {
		font-family: 'Liberation Sans', 'Noto Sans CJK SC', sans-serif;
		font-weight: bold;
	}

	.bai {
		font-size: 64px;
	}

	.du {
		font-size: 37px;
	}

	.jy {
		font-size: 48px;
	}

	.url {
		font-family: 'Open Sans', sans-serif;
		font-size: 33px;
	}

	.mini {
		position: absolute;
		left: 313px;
		top: 223px;
		display: flex;
		align-items: center;
		padding: 1px 3px 1px 0;
		background: #fff;
		box-shadow: 0 0 3px rgba(0, 0, 0, 0.5);
	}

	.mini .lines {
		width: 209px;
		gap: 3px;
	}

	.mini .font {
		width: 80px;
	}

	.mini .steps {
		gap: 3px;
		margin-left: 0;
	}

	.mini .line > .tool {
		width: 24px;
	}

	.mini .line > .tool.drop {
		width: 33px;
		padding-left: 2px;
	}

	.mini .bar {
		height: 46px;
		margin-right: 3px;
	}

	.mini .big {
		height: 51px;
	}

	.mini .on.drop {
		background: linear-gradient(#fff, #fff) 23px 2px / 8px 20px no-repeat #dce1e6;
	}

	.menu {
		position: absolute;
		left: 308px;
		top: 294px;
		width: 255px;
		box-sizing: border-box;
		border: 1px solid #dcdfe7;
		background: #fff;
		box-shadow: 0 1px 3px rgba(80, 90, 130, 0.2);
	}

	.menu hr {
		height: 1px;
		margin: 4px 0;
		border: 0;
		background: #e0e3ea;
	}

	.item {
		width: 100%;
		height: 28px;
		padding: 0 0 0 7px;
	}

	.item.short {
		height: 27px;
	}

	.item.hover {
		background: #e5e8ee;
	}

	.slot {
		width: 18px;
		margin-right: 8px;
	}

	.label {
		flex: 1;
		text-align: left;
	}

	.keys {
		margin-right: 17px;
		color: #85878c;
		font-family: 'Open Sans', sans-serif;
		font-size: 13px;
	}

	.extra {
		padding: 0 5px 0 9px;
		border-left: 1px solid #e0e3ea;
	}

	.sub {
		display: flex;
		align-items: center;
		height: 12px;
		padding: 0 8px 0 10px;
	}

	.sub.split {
		border-left: 1px solid #e0e3ea;
	}

	.highlight {
		position: absolute;
		left: 303px;
		top: 725px;
		width: 343px;
		height: 42px;
		box-sizing: border-box;
		border: 4px solid rgba(255, 30, 30, 0.5);
		border-radius: 12px;
		pointer-events: none;
	}

	.pointer-line {
		position: absolute;
		left: 296px;
		top: 550px;
		fill: rgba(255, 50, 50, 0.5);
		pointer-events: none;
	}

	.cursor {
		position: absolute;
		left: 544px;
		top: 741px;
		pointer-events: none;
	}
</style>
